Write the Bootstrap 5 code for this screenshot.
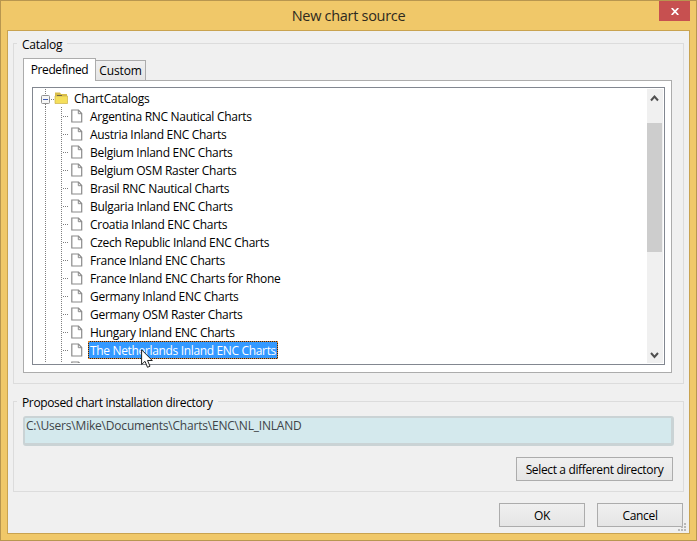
<!DOCTYPE html>
<html lang="en">
<head>
<meta charset="utf-8">
<title>New chart source</title>
<link href="https://cdn.jsdelivr.net/npm/bootstrap@5.3.0/dist/css/bootstrap.min.css" rel="stylesheet">
<style>
body{width:697px;height:541px;overflow:hidden;font:12px/18px "Open Sans","Noto Sans",sans-serif;letter-spacing:-.22px;color:#000}
.win{width:697px;height:541px;background:#f0c869;border:1px solid #b8964f;padding:0 6px 6px}
.titlebar{height:29px;font-size:14.5px;line-height:29px;letter-spacing:-.3px;color:#2e2a20}
.closer{top:0;right:6px;width:31px;height:20px;background:#c75050;border:0}
.client{width:683px;height:504px;background:#f0f0f0;border:1px solid #c9a350;padding:12px 5px 0 5px}
.group{width:671px;border:1px solid #dcdcdc;padding:0 10px 0 9px}
.g1{height:341px}
.g2{height:91px;margin-top:17px}
.legend-text{height:14px;line-height:15px;margin:-7px 0 0 -6px;padding:0 5px;background:#f0f0f0;width:max-content}
.g2 .legend-text{letter-spacing:-.36px}
.tabs{height:23px;margin-top:6px}
.tab{border:1px solid #acacac;border-bottom:0;border-radius:0;padding:0;color:#000;font-size:12px;line-height:20px;text-align:center;letter-spacing:-.15px}
.tab.on,.tab.on:hover{width:73px;height:23px;background:#fff;border-color:#acacac;z-index:2;margin-bottom:-1px;letter-spacing:-.4px}
.tab.off{width:51px;height:20px;background:linear-gradient(#f0f0f0,#e5e5e5);margin-left:-1px}
.pane{width:649px;height:293px;border:1px solid #acacac;background:#fff;padding:6px 7px 7px 8px}
.tree{width:633px;height:278px;border:1px solid #828790;padding:1px 1px 1px 0;background:#fff}
.nodes{height:274px;overflow:hidden;padding-left:8px}
.node{height:18px;line-height:18px;white-space:nowrap}
.kids{margin-left:4px;background:repeating-linear-gradient(#808080 0 1px,transparent 1px 2px) 0 0/1px 100% no-repeat,repeating-linear-gradient(#808080 0 1px,transparent 1px 2px) 16px 0/1px 100% no-repeat;letter-spacing:-.29px}
.kids .node{padding-left:18px}
.twig{width:6px;height:1px;background:repeating-linear-gradient(90deg,#808080 0 1px,transparent 1px 2px);margin-right:2px}
.doc{width:12px;height:14px;margin-right:5px}
.name{padding:0 2px;height:18px;line-height:19px}
.picked{background:linear-gradient(#39f,#39f) padding-box,#1c2430 border-box;color:#fff;border:1px dotted #e08a30;padding:0 1px;line-height:17px;letter-spacing:-.34px}
.scroll{width:16px;background:#f0f0f0}
.thumb{height:129px;margin-top:14px;background:#cdcdcd;width:15px}
.arrow{height:20px}
.path{width:651px;height:30px;margin-top:7px;border:2px solid #cad3d5;border-right-width:3px;border-bottom-width:3px;border-radius:3px;background:#d4e9ed;padding:0 1px;line-height:16px;font-size:12px;letter-spacing:-.2px;color:#404448}
.push{height:24px;border:1px solid #acacac;border-radius:0;background:linear-gradient(#f0f0f0,#e5e5e5);font-size:12px;line-height:21px;padding:0;color:#000;letter-spacing:-.32px}
.wide{width:157px;margin-top:11px;letter-spacing:-.36px}
.std{width:86px}
.actions{margin-top:11px;gap:12px;padding-right:1px}
.grip{right:10px;bottom:9px}
.cursor{left:140px;top:348px}
</style>
<script src="https://cdn.jsdelivr.net/npm/bootstrap@5.3.0/dist/js/bootstrap.bundle.min.js"></script>
</head>
<body>
<svg class="d-none"><symbol id="doc" viewBox="0 0 12 14"><path d="M.8 1H7.500L10.700 4.500V13H.8Z" fill="#fff" stroke="#8a8a8a" stroke-width="1.200"/><path d="M7.300 1V4.700H10.700" fill="none" stroke="#8a8a8a"/></symbol></svg>
<div class="win position-relative">
  <div class="titlebar text-center">New chart source
    <button class="closer position-absolute p-0 d-flex align-items-center justify-content-center" aria-label="Close"><svg width="8" height="7" viewBox="0 0 8 7"><path d="M.7 0L7.300 7M7.300 0L.7 7" stroke="#fff" stroke-width="1.700"/></svg></button>
  </div>
  <main class="client">
    <section class="group g1">
      <div class="legend-text">Catalog</div>
      <div class="tabs d-flex align-items-end"><button class="tab on btn position-relative">Predefined</button><button class="tab off btn">Custom</button></div>
      <div class="pane">
        <div class="tree d-flex">
          <div class="nodes flex-grow-1">
            <div class="root-node node d-flex align-items-center">
              <svg width="31" height="18" viewBox="0 0 31 18"><path d="M4.500 0V6M4.500 15V18M10 10.500H13" stroke="#808080" stroke-dasharray="1 1"/><rect x=".5" y="6.500" width="8" height="8" rx="1" fill="#f6f6f6" stroke="#919191"/><path d="M2 10.500H7" stroke="#3d5bb5"/><path d="M14 5V3.500H19L20 5H26V14H14Z" fill="#d9bd4a"/><path d="M14 7H26.500V14.500H14Z" fill="#f5df5b" stroke="#cbb24b" stroke-width=".7"/><path d="M16 6.500H21" stroke="#6e6547"/></svg>
              <span class="name">ChartCatalogs</span>
            </div>
            <div class="kids">
              <div class="node d-flex align-items-center"><i class="twig"></i><svg class="doc"><use href="#doc"/></svg><span class="name">Argentina RNC Nautical Charts</span></div>
              <div class="node d-flex align-items-center"><i class="twig"></i><svg class="doc"><use href="#doc"/></svg><span class="name">Austria Inland ENC Charts</span></div>
              <div class="node d-flex align-items-center"><i class="twig"></i><svg class="doc"><use href="#doc"/></svg><span class="name">Belgium Inland ENC Charts</span></div>
              <div class="node d-flex align-items-center"><i class="twig"></i><svg class="doc"><use href="#doc"/></svg><span class="name">Belgium OSM Raster Charts</span></div>
              <div class="node d-flex align-items-center"><i class="twig"></i><svg class="doc"><use href="#doc"/></svg><span class="name">Brasil RNC Nautical Charts</span></div>
              <div class="node d-flex align-items-center"><i class="twig"></i><svg class="doc"><use href="#doc"/></svg><span class="name">Bulgaria Inland ENC Charts</span></div>
              <div class="node d-flex align-items-center"><i class="twig"></i><svg class="doc"><use href="#doc"/></svg><span class="name">Croatia Inland ENC Charts</span></div>
              <div class="node d-flex align-items-center"><i class="twig"></i><svg class="doc"><use href="#doc"/></svg><span class="name">Czech Republic Inland ENC Charts</span></div>
              <div class="node d-flex align-items-center"><i class="twig"></i><svg class="doc"><use href="#doc"/></svg><span class="name">France Inland ENC Charts</span></div>
              <div class="node d-flex align-items-center"><i class="twig"></i><svg class="doc"><use href="#doc"/></svg><span class="name">France Inland ENC Charts for Rhone</span></div>
              <div class="node d-flex align-items-center"><i class="twig"></i><svg class="doc"><use href="#doc"/></svg><span class="name">Germany Inland ENC Charts</span></div>
              <div class="node d-flex align-items-center"><i class="twig"></i><svg class="doc"><use href="#doc"/></svg><span class="name">Germany OSM Raster Charts</span></div>
              <div class="node d-flex align-items-center"><i class="twig"></i><svg class="doc"><use href="#doc"/></svg><span class="name">Hungary Inland ENC Charts</span></div>
              <div class="node d-flex align-items-center"><i class="twig"></i><svg class="doc"><use href="#doc"/></svg><span class="name picked">The Netherlands Inland ENC Charts</span></div>
              <div class="node d-flex align-items-center"><i class="twig"></i><svg class="doc"><use href="#doc"/></svg></div>
            </div>
          </div>
          <div class="scroll d-flex flex-column">
            <svg class="arrow" width="16" height="20" viewBox="0 0 16 20"><path d="M4 11.500L7.500 7.500L11 11.500" fill="none" stroke="#505050" stroke-width="2"/></svg>
            <div class="thumb"></div>
            <svg class="arrow mt-auto" width="16" height="20" viewBox="0 0 16 20"><path d="M4 10L7.500 14L11 10" fill="none" stroke="#505050" stroke-width="2"/></svg>
          </div>
        </div>
      </div>
    </section>
    <section class="group g2">
      <div class="legend-text">Proposed chart installation directory</div>
      <div class="path">C:\Users\Mike\Documents\Charts\ENC\NL_INLAND</div>
      <div class="d-flex justify-content-end"><button class="push wide btn">Select a different directory</button></div>
    </section>
    <div class="actions d-flex justify-content-end"><button class="push std btn">OK</button><button class="push std btn">Cancel</button></div>
  </main>
  <svg class="grip position-absolute" width="8" height="8" viewBox="0 0 8 8" fill="#b8b8b8"><path d="M6 0h2v2h-2zM3 3h2v2h-2zM6 3h2v2h-2zM0 6h2v2h-2zM3 6h2v2h-2zM6 6h2v2h-2z"/></svg>
  <svg class="cursor position-absolute" width="13" height="20" viewBox="0 0 13 20"><path d="M.6.8V15.500L4 12.300L6.500 18.300L9 17.200L6.500 11.500H11.300Z" fill="#fff" stroke="#222"/></svg>
</div>
</body>
</html>
